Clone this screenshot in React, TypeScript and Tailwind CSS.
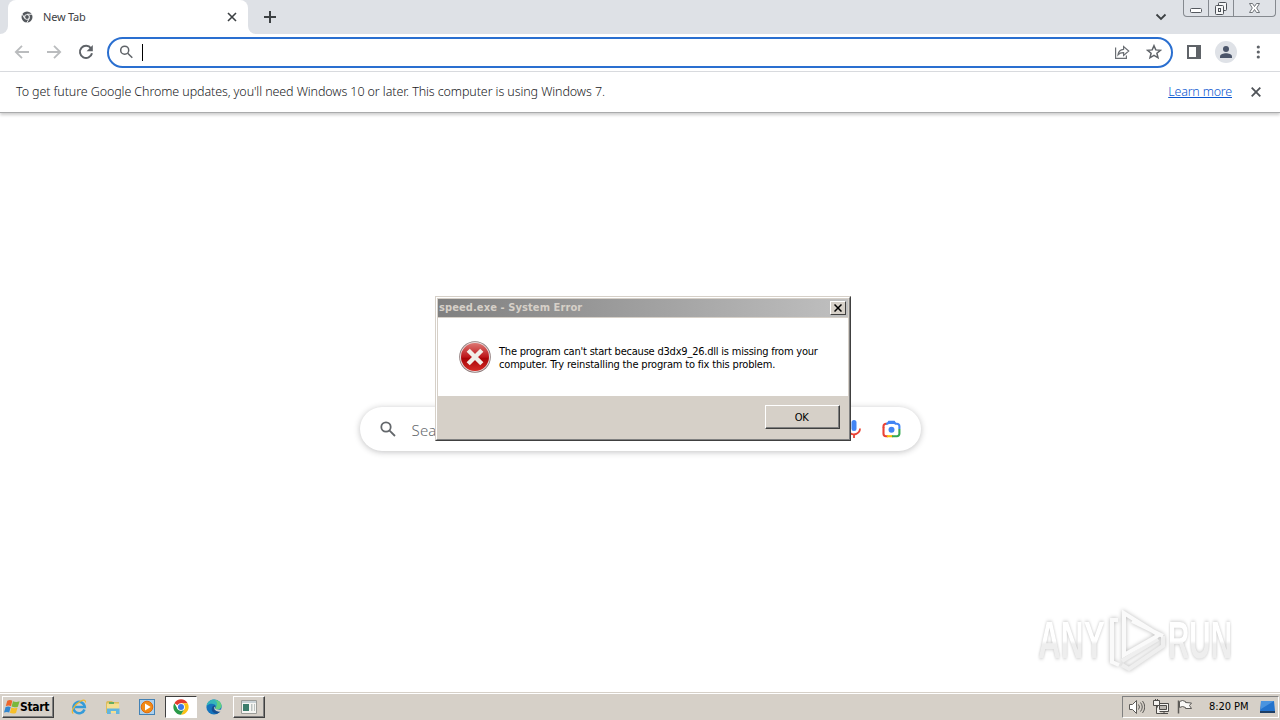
import type { ReactNode } from "react";

const tahoma = "font-['DejaVu_Sans_Condensed','DejaVu_Sans',sans-serif] [font-stretch:condensed]";

function ChromeMono() {
  return (
    <svg width="12" height="12" viewBox="0 0 24 24" fill="none">
      <circle cx="12" cy="12" r="11" fill="#54585d" />
      <path d="M12 6.5h10M7.3 14.7 2.5 6.3M16.7 14.7l-5 8.7" stroke="#fff" strokeWidth="1.8" />
      <circle cx="12" cy="12" r="5.6" fill="#fff" />
      <circle cx="12" cy="12" r="3.8" fill="#54585d" />
    </svg>
  );
}

function ChromeColor() {
  return (
    <svg width="16" height="16" viewBox="0 0 48 48">
      <circle cx="24" cy="24" r="23" fill="#fff" />
      <path d="M24 24 4.1 12.5A23 23 0 0 1 43.9 12.5H24z" fill="#e33b2e" />
      <path d="M43.9 12.5A23 23 0 0 1 24 47l10-17.2V24L24 12.5z" fill="#fbc116" />
      <path d="M4.1 12.5A23 23 0 0 0 24 47l10-17.2-10 4.7-10-4.7z" fill="#2a9a48" />
      <circle cx="24" cy="24" r="11.5" fill="#fff" />
      <circle cx="24" cy="24" r="9" fill="#3b78e7" />
    </svg>
  );
}

function WindowControls() {
  return (
    <div className="flex h-[17px] w-[93px] rounded-b-[4px] border border-t-0 border-[#85898f] bg-[#dfe2e7]">
      <div className="w-[25px] border-r border-[#85898f]">
        <svg width="24" height="16" fill="#fff" stroke="#55595f">
          <rect x="6.5" y="8.5" width="11" height="4" rx="1" />
        </svg>
      </div>
      <div className="w-[25px] border-r border-[#85898f]">
        <svg width="24" height="16" fill="#f5f6f7" stroke="#4d5157">
          <rect x="9.5" y="2.5" width="8" height="8" rx="1" />
          <rect x="6.5" y="5.5" width="8" height="9" rx="1" />
          <rect x="9.5" y="8.5" width="2" height="3" />
        </svg>
      </div>
      <svg width="41" height="16" fill="#fff" stroke="#62666c" strokeWidth="0.9">
        <path d="M15.5 3.5h3l2 3 2-3h3l-2.8 4.5 2.8 4.5h-3l-2-3-2 3h-3l2.8-4.5z" />
      </svg>
    </div>
  );
}

function TabStrip() {
  return (
    <div className="flex h-[34px] items-start bg-[#dee1e6]">
      <div className="h-[34px] w-2 bg-white">
        <div className="h-full rounded-br-lg bg-[#dee1e6]" />
      </div>
      <div className="flex h-[34px] w-[240px] items-center rounded-t-lg bg-white pl-[13px] pr-[11px]">
        <ChromeMono />
        <span className="ml-[10px] font-['Noto_Sans',sans-serif] text-[11px] tracking-[-0.2px] text-[#3c4043]">New Tab</span>
        <svg className="ml-auto" width="10" height="10" stroke="#3c4043" strokeWidth="1.6">
          <path d="m1 1 8 8M9 1 1 9" />
        </svg>
      </div>
      <div className="h-[34px] w-2 bg-white">
        <div className="h-full rounded-bl-lg bg-[#dee1e6]" />
      </div>
      <svg className="ml-[7px] mt-[10px]" width="14" height="14" stroke="#3c4043" strokeWidth="2">
        <path d="M7 1v12M1 7h12" />
      </svg>
      <svg className="ml-auto mr-4 mt-[13px]" width="12" height="8" fill="none" stroke="#3c4043" strokeWidth="1.8">
        <path d="m1.5 1.5 4.5 4.5 4.5-4.5" />
      </svg>
      <div className="mr-[4px]">
        <WindowControls />
      </div>
    </div>
  );
}

function Toolbar() {
  return (
    <div className="flex h-[38px] items-center border-b border-[#dadce0] bg-white pb-px pl-[14px]">
      <svg width="16" height="16" fill="none" stroke="#babcbe" strokeWidth="1.8">
        <path d="M15 8H2M8 1.8 1.8 8 8 14.2" />
      </svg>
      <svg className="ml-4" width="16" height="16" fill="none" stroke="#babcbe" strokeWidth="1.8">
        <path d="M1 8h13M8 1.8 14.2 8 8 14.2" />
      </svg>
      <svg className="ml-4" width="16" height="16" fill="none" stroke="#5f6368" strokeWidth="2">
        <path d="M13 4.3A6.1 6.1 0 1 0 14 9.3" />
        <path d="M14.8 1v6.2H8.6z" fill="#5f6368" stroke="none" />
      </svg>
      <div className="mt-px ml-[13px] flex h-[31px] w-[1066px] items-center rounded-full border-2 border-[#2a6fd0] bg-white pl-[11px] pr-[9px]">
        <svg className="-mt-px" width="14" height="14" fill="none" stroke="#5f6368" strokeWidth="1.5">
          <circle cx="4.7" cy="5.2" r="4" />
          <path d="m7.7 8.2 4.6 4.6" />
        </svg>
        <div className="ml-2 h-[17px] w-px bg-black" />
        <svg className="-mt-px ml-auto" width="16" height="16" fill="none" stroke="#6b6f74" strokeWidth="1.2">
          <path d="M1.6 3.5v10.9h10.8v-2.8M4 10.8C4.4 7.2 6.3 5.5 9.6 5.3V2.5L14.7 7l-5.1 4.4V8.6C7 8.5 5.3 9.2 4 10.8z" />
        </svg>
        <svg className="-mt-px ml-4" width="16" height="16" fill="none" stroke="#5f6368" strokeWidth="1.5">
          <path d="m8 1.7 1.8 4.2 4.6.4-3.5 3 1.1 4.5L8 11.4l-4 2.4 1.1-4.5-3.5-3 4.6-.4z" />
        </svg>
      </div>
      <svg className="ml-[14px]" width="14" height="14">
        <path d="M0 0h14v14H0zM2 2v10h7V2z" fill="#5f6368" fillRule="evenodd" />
      </svg>
      <div className="ml-[14px] flex size-[22px] items-center justify-center rounded-full bg-[#dfe2e7]">
        <svg width="14" height="14" fill="#4b556a">
          <circle cx="7" cy="4" r="3" />
          <path d="M1 13v-1.5C1 9.3 4.5 8.2 7 8.2s6 1.1 6 3.3V13z" />
        </svg>
      </div>
      <svg className="ml-[19px]" width="4" height="14" fill="#5f6368">
        <circle cx="2.3" cy="2" r="1.6" />
        <circle cx="2.3" cy="7" r="1.6" />
        <circle cx="2.3" cy="12" r="1.6" />
      </svg>
    </div>
  );
}

function InfoBar() {
  return (
    <div className="relative flex h-[41px] items-center border-b border-[#aaabac] bg-white pl-4 pr-[19px] shadow-[0_2px_3px_rgba(0,0,0,0.2)]">
      <span className="whitespace-nowrap font-['Noto_Sans',sans-serif] text-[12.5px] font-light tracking-[-0.1px] text-[#202124]">
        To get future Google Chrome updates, you'll need Windows 10 or later. This computer is using Windows 7.
      </span>
      <a className="ml-auto font-['Noto_Sans',sans-serif] text-[12.5px] font-light tracking-[-0.2px] text-[#0b57d0] underline">
        Learn more
      </a>
      <svg className="ml-[19px]" width="10" height="10" stroke="#4f5358" strokeWidth="1.8">
        <path d="m.7.7 8.6 8.6M9.3.7.7 9.3" />
      </svg>
    </div>
  );
}

function SearchBox() {
  return (
    <div className="mt-[294px] flex h-[44px] w-[561px] items-center rounded-full bg-white pl-[20px] pr-[20px] shadow-[0_1px_6px_rgba(32,33,36,0.28)]">
      <svg width="16" height="16" fill="none" stroke="#63676b" strokeWidth="1.8">
        <circle cx="6" cy="6" r="4.7" />
        <path d="m9.6 9.6 5.4 5.4" />
      </svg>
      <span className="ml-4 mt-[2px] font-['Noto_Sans',sans-serif] text-[15px] font-light tracking-[0.2px] text-[#65696d]">
        Search Google or type a URL
      </span>
      <svg className="ml-auto" width="14" height="20" viewBox="0 0 14 20" fill="none">
        <rect x="4.5" y="1" width="5" height="11" rx="2.5" fill="#4285f4" />
        <path d="M1 9.5a6 6 0 0 0 2 4.3" stroke="#fbbc05" strokeWidth="1.8" />
        <path d="M3 13.8a6 6 0 0 0 10-4.3M7 15.5V19" stroke="#ea4335" strokeWidth="1.8" />
      </svg>
      <svg className="ml-[21px]" width="19" height="18" viewBox="0 0 19 18" fill="none" strokeWidth="2.1">
        <path d="M1.5 8V6.2a2.4 2.4 0 0 1 2.4-2.4H5" stroke="#ea4335" />
        <path d="M4.2 3.8h1.3L7 1.8h5l1.5 2H15a2.4 2.4 0 0 1 2.4 2.4V9" stroke="#4285f4" />
        <path d="M1.5 7.5v6.3a2.4 2.4 0 0 0 2.4 2.4H6" stroke="#ea4335" />
        <path d="M5 16.2h6" stroke="#fbbc05" />
        <path d="M10 16.2h5a2.4 2.4 0 0 0 2.4-2.4V9" stroke="#34a853" />
        <path d="M5 4h9l-1.5-3h-6z" fill="#4285f4" />
        <circle cx="9.5" cy="9.8" r="3" fill="#4285f4" />
      </svg>
    </div>
  );
}

function Watermark() {
  const word =
    "inline-block origin-left bg-linear-to-b from-white from-50% to-[#eeeeee] to-55% bg-clip-text font-['Liberation_Sans',sans-serif] text-[51px] font-bold leading-[62px] text-transparent drop-shadow-[0_0_2px_rgba(0,0,0,0.26)]";
  return (
    <div className="absolute left-[1038px] top-[610px] flex h-[62px] w-[198px]">
      <div className="w-[70px]">
        <span className={`${word} scale-x-[0.62]`}>ANY</span>
      </div>
      <svg
        className="w-[60px] shrink-0 overflow-visible drop-shadow-[0_0_2px_rgba(0,0,0,0.28)]"
        height="62"
        fill="none"
        strokeWidth="4"
      >
        <path d="M14 55l7 4 34-23V26M14 51l36-22" stroke="#efefef" />
        <path d="M16 8v37l35-20L16 3zM10 10H4v42l7 3M24 11l31 15" stroke="#fafafa" />
      </svg>
      <div className="w-[68px]">
        <span className={`${word} scale-x-[0.58]`}>RUN</span>
      </div>
    </div>
  );
}

function ErrorDialog() {
  return (
    <div
      className={`${tahoma} absolute left-[435px] top-[296px] h-[145px] w-[416px] border border-b-[#404040] border-l-[#d6d0c8] border-r-[#404040] border-t-[#d6d0c8] bg-[#d6d0c8] text-[11px] text-black`}
    >
      <div className="flex h-full flex-col border border-b-[#808080] border-l-white border-r-[#808080] border-t-white p-px">
        <div className="flex h-[18px] shrink-0 items-center justify-between bg-linear-to-r from-[#808080] to-[#c0c0c0] pl-px pr-[2px]">
          <span className="pt-px font-bold tracking-[0.1px] text-[#d6d0c8]">speed.exe - System Error</span>
          <div className="flex h-[14px] w-4 items-center justify-center border border-b-[#404040] border-l-white border-r-[#404040] border-t-white bg-[#d6d0c8]">
            <svg width="8" height="8" stroke="#000" strokeWidth="1.5">
              <path d="m.5.5 7 7M7.5.5l-7 7" />
            </svg>
          </div>
        </div>
        <div className="mt-px flex h-[78px] shrink-0 bg-white pl-[21px] pt-[23px]">
          <svg width="32" height="32" viewBox="0 0 32 32">
            <defs>
              <linearGradient id="red" x2="0" y2="1">
                <stop stopColor="#dd7773" />
                <stop offset=".5" stopColor="#bd171b" />
                <stop offset=".55" stopColor="#a80508" />
                <stop offset="1" stopColor="#d52b25" />
              </linearGradient>
            </defs>
            <circle cx="16" cy="16" r="15.8" fill="#8b7777" />
            <circle cx="16" cy="16" r="15" fill="#e8dada" />
            <circle cx="16" cy="16" r="14" fill="url(#red)" />
            <path d="m9.2 9.2 13.6 13.6M22.8 9.2 9.2 22.8" stroke="#f1eee8" strokeWidth="4.4" />
          </svg>
          <p className="ml-[8px] mt-[4px] whitespace-nowrap leading-[13px] tracking-[-0.21px]">
            The program can't start because d3dx9_26.dll is missing from your
            <br />
            <span className="tracking-[-0.18px]">computer. Try reinstalling the program to fix this problem.</span>
          </p>
        </div>
        <div className="flex justify-end pr-[8px] pt-[9px]">
          <div className="h-[24px] w-[75px] border border-b-[#404040] border-l-white border-r-[#404040] border-t-white">
            <div className="flex h-full items-center justify-center border-b border-r border-[#808080] pr-px pt-[3px] tracking-[-0.4px]">
              OK
            </div>
          </div>
        </div>
      </div>
    </div>
  );
}

function TaskIcon({ children }: { children: ReactNode }) {
  return <div className="flex w-[34px] items-center justify-center">{children}</div>;
}

function Taskbar() {
  return (
    <div className={`${tahoma} h-[28px] border-t border-[#d6d0c8] text-[11px] text-black`}>
      <div className="flex h-[27px] items-center border-t border-white bg-[#d6d0c8] pl-[2px] pr-px">
        <div className="flex h-[22px] w-[52px] items-center border border-b-[#404040] border-l-white border-r-[#404040] border-t-white">
          <div className="flex h-full w-full items-center border-b border-r border-[#808080] pl-px">
            <svg className="shrink-0" width="16" height="16" viewBox="0 0 16 16">
              <path d="M3.3 1.8Q6 .4 8.3 1.8L7 7.2Q4.8 5.8 1.8 7.1z" fill="#ed662b" />
              <path d="M9 2.3q2.9 1.4 6.6 0l-1.7 5.5Q10.5 9 7.6 7.6z" fill="#79b83d" />
              <path d="M1.6 7.9q2.9-1.1 5.1.2L5.2 13.6Q3 12.3 0 13.6z" fill="#3287d0" />
              <path d="M7.4 8.5q2.8 1.4 6.1.3l-1.5 5.2q-3.2 1.2-6.1-.2z" fill="#f7bf29" />
            </svg>
            <span className="pt-px text-[12px] font-bold tracking-[-0.35px]">Start</span>
          </div>
        </div>
        <div className="ml-[8px] flex h-[22px]">
          <TaskIcon>
            <svg width="16" height="16" viewBox="0 0 16 16" fill="none">
              <path d="M13.5 10.5A5.7 5.7 0 1 1 13.8 8H4" stroke="#359bd9" strokeWidth="2.5" />
              <path d="M2.3 14.5C-1 12.7 4 5 9.5 2.2c3.8-1.9 5.2-1 5 1.3" stroke="#eeb72e" strokeWidth="1.2" />
            </svg>
          </TaskIcon>
          <TaskIcon>
            <svg width="16" height="16" viewBox="0 0 16 16">
              <path d="M1 3.5 2 2h5l1 1h6v11H1z" fill="#dbbd60" />
              <path d="M2 4.5h12V14H2z" fill="#f5df91" />
              <path d="M4 3h5v2H4z" fill="#65ad61" />
              <path d="M2 9.5h12.5V15H11v-3H5.8v3H2z" fill="#62b5df" />
            </svg>
          </TaskIcon>
          <TaskIcon>
            <svg width="16" height="16" viewBox="0 0 16 16">
              <rect x=".5" y=".5" width="15" height="15" fill="#add0ec" stroke="#4382b5" />
              <circle cx="8" cy="8" r="5.8" fill="#f18a16" stroke="#e06b0b" />
              <path d="m6 4.5 5.7 3.5L6 11.5z" fill="#fff" />
            </svg>
          </TaskIcon>
          <div className="ml-px flex h-[22px] w-[32px] items-center justify-center border border-b-white border-l-[#404040] border-r-white border-t-[#404040] bg-white">
            <ChromeColor />
          </div>
          <TaskIcon>
            <svg width="16" height="16" viewBox="0 0 16 16">
              <circle cx="8" cy="8" r="7.6" fill="#1574bd" />
              <path d="M.5 7C1 2.8 4.2.4 8 .4c4.4 0 7.6 3 7.6 6.4 0 2.5-2 3.7-4.2 3.7-1.8 0-2.4-.6-2.4-1.1 0-.6.8-.8.8-2.1C9.8 5 4.5 3 .5 7z" fill="#36b5ba" />
              <path d="M9 1q6 .8 6.5 5.8-.4 3.4-4 3.6Q8.6 10.3 9.4 9q3.8-4.5-.4-8z" fill="#64cf80" />
              <path d="M9 9.5q1.8 3.5 5.8 2-1.2 2.2-3.8 3.3-5-.5-5.4-4.8Q6 7 8.5 6.3q1.8 1 .5 3.2z" fill="#174f91" />
              <path d="M9.2 7.3Q8.6 9.5 9.6 10q2.4 1.2 5.9.5l.5 1-1.2 1q-4.5.7-6.3-1.9Q7.5 8 9.2 7.3z" fill="#d6d0c8" />
            </svg>
          </TaskIcon>
          <div className="ml-[2px] h-[22px] w-[32px] border border-b-[#404040] border-l-white border-r-[#404040] border-t-white">
            <div className="flex h-full items-center justify-center border-b border-r border-[#808080]">
              <svg width="16" height="14">
                <path d="M.5.5h15v13H.5z" fill="#f6f6f3" stroke="#9b9c98" />
                <path d="M1 1h14v2H1z" fill="#c9d2d6" />
                <path d="M2 4h6v7H2z" fill="#3c7d6c" />
                <path d="M10 4h1.5v7H10zM13 4h1v7h-1z" fill="#bbc3c1" />
              </svg>
            </div>
          </div>
        </div>
        <div className="ml-auto flex h-[22px] w-[157px] items-center border border-b-white border-l-[#808080] border-r-white border-t-[#808080] pl-[6px]">
          <svg width="16" height="16" fill="#fff" stroke="#5c5a57">
            <path d="M.5 5.5h3l4-4v13l-4-4h-3z" />
            <path d="M9.5 5.5q2 2.5 0 5M11.5 3.5q3.5 4.5 0 9M13.5 2q4.5 6 0 12" fill="none" />
          </svg>
          <svg className="ml-[8px]" width="17" height="16" fill="#f4f2ef" stroke="#4d4b48">
            <path d="M4.5 4.5h11v8h-11zM7 14.5h8M11 12.5v2" />
            <path d="M6.5 6.5h7v4h-7z" fill="#bab6b0" />
            <path d="M.5 1.5h6v5h-6zM2.5 0v2M4.5 0v2M3.5 6.5v8h4" />
          </svg>
          <svg className="ml-[7px]" width="17" height="16" fill="#f9f8f6" stroke="#5c5a57">
            <path d="M1.5 1.5v13" strokeWidth="1.5" />
            <path d="M2.5 2.5q3-2 6 0v1l6 .5-2 2.5 2 3h-6v-1q-3-2-6 0z" />
          </svg>
          <span className="ml-[15px] whitespace-nowrap pt-px tracking-[-0.05px]">8:20 PM</span>
          <svg className="ml-auto mr-[2px]" width="17" height="14">
            <path d="M2 1h13l1 10H1z" fill="#2373cd" />
            <path d="M2 1h13L2 9z" fill="#4a94df" />
            <path d="M1 11h15v2H1z" fill="#1d3e65" />
          </svg>
        </div>
      </div>
    </div>
  );
}

export default function App() {
  return (
    <div className="relative flex h-[720px] w-[1280px] flex-col overflow-hidden bg-white">
      <TabStrip />
      <Toolbar />
      <InfoBar />
      <main className="flex flex-1 justify-center">
        <SearchBox />
      </main>
      <Watermark />
      <ErrorDialog />
      <Taskbar />
    </div>
  );
}
